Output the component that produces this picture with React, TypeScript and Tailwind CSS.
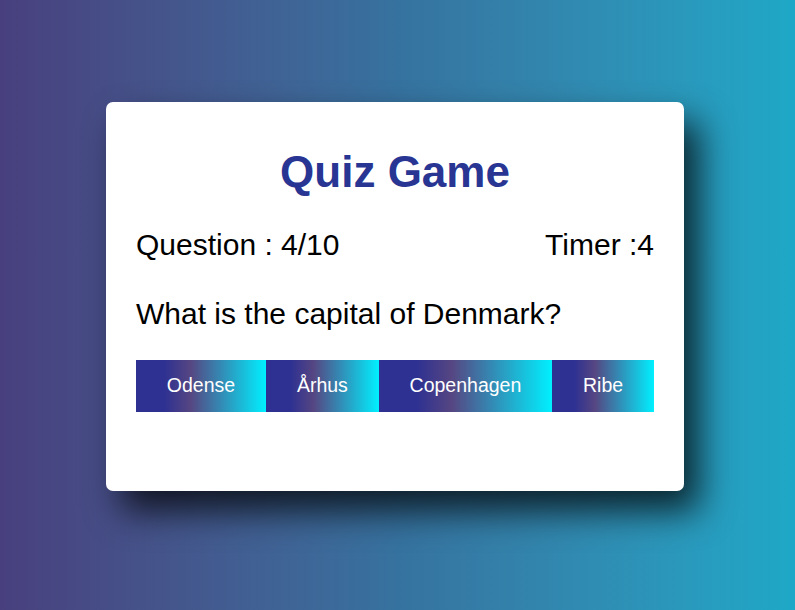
const answers = ["Odense", "Århus", "Copenhagen", "Ribe"];

const App = () => {
  return (
    <div className="min-h-screen w-full bg-gradient-to-r from-[#48407e] via-[#36729f] to-[#1ea8c7] pl-[106px] pt-[102px] font-['Liberation_Sans',Arial,sans-serif]">
      <div className="w-[578px] h-[389px] bg-white rounded-[7px] p-[30px] shadow-[15px_20px_35px_rgba(0,0,0,0.75)]">
        <h1 className="text-center text-[44px] font-bold text-[#283593] leading-none mt-[18px]">
          Quiz Game
        </h1>
        <div className="flex justify-between items-center mt-[36px] text-[30px] text-black leading-none">
          <span>Question : 4/10</span>
          <span>Timer :4</span>
        </div>
        <p className="mt-[39px] text-[30px] text-black leading-none">
          What is the capital of Denmark?
        </p>
        <div className="flex mt-[31px]">
          {answers.map((a) => (
            <button
              key={a}
              className="grow h-[52px] px-[30px] text-[19.5px] text-white bg-[linear-gradient(to_right,#2e3192_22%,#564682_42%,#00f0ff_100%)]"
            >
              {a}
            </button>
          ))}
        </div>
      </div>
    </div>
  );
};

export default App;
